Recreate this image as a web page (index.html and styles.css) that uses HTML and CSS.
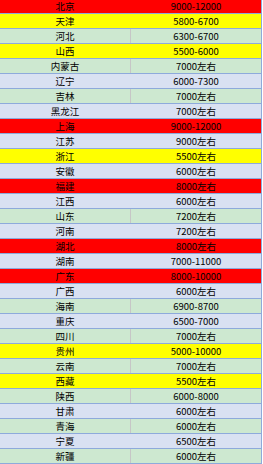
FILE: index.html
```html
<!DOCTYPE html>
<html lang="zh">
<head>
<meta charset="utf-8">
<link rel="stylesheet" href="styles.css">
</head>
<body>
<div class="table">
  <div class="row red"><div class="cell">北京</div><div class="cell val">9000-12000</div></div>
  <div class="row yellow"><div class="cell">天津</div><div class="cell val">5800-6700</div></div>
  <div class="row green"><div class="cell">河北</div><div class="cell val">6300-6700</div></div>
  <div class="row yellow"><div class="cell">山西</div><div class="cell val">5500-6000</div></div>
  <div class="row green"><div class="cell">内蒙古</div><div class="cell val">7000左右</div></div>
  <div class="row blue"><div class="cell">辽宁</div><div class="cell val">6000-7300</div></div>
  <div class="row green"><div class="cell">吉林</div><div class="cell val">7000左右</div></div>
  <div class="row blue"><div class="cell">黑龙江</div><div class="cell val">7000左右</div></div>
  <div class="row red"><div class="cell">上海</div><div class="cell val">9000-12000</div></div>
  <div class="row blue"><div class="cell">江苏</div><div class="cell val">9000左右</div></div>
  <div class="row yellow"><div class="cell">浙江</div><div class="cell val">5500左右</div></div>
  <div class="row blue"><div class="cell">安徽</div><div class="cell val">6000左右</div></div>
  <div class="row red"><div class="cell">福建</div><div class="cell val">8000左右</div></div>
  <div class="row blue"><div class="cell">江西</div><div class="cell val">6000左右</div></div>
  <div class="row green"><div class="cell">山东</div><div class="cell val">7200左右</div></div>
  <div class="row blue"><div class="cell">河南</div><div class="cell val">7200左右</div></div>
  <div class="row red"><div class="cell">湖北</div><div class="cell val">8000左右</div></div>
  <div class="row blue"><div class="cell">湖南</div><div class="cell val">7000-11000</div></div>
  <div class="row red"><div class="cell">广东</div><div class="cell val">8000-10000</div></div>
  <div class="row blue"><div class="cell">广西</div><div class="cell val">6000左右</div></div>
  <div class="row green"><div class="cell">海南</div><div class="cell val">6900-8700</div></div>
  <div class="row blue"><div class="cell">重庆</div><div class="cell val">6500-7000</div></div>
  <div class="row green"><div class="cell">四川</div><div class="cell val">7000左右</div></div>
  <div class="row yellow"><div class="cell">贵州</div><div class="cell val">5000-10000</div></div>
  <div class="row green"><div class="cell">云南</div><div class="cell val">7000左右</div></div>
  <div class="row yellow"><div class="cell">西藏</div><div class="cell val">5500左右</div></div>
  <div class="row green"><div class="cell">陕西</div><div class="cell val">6000-8000</div></div>
  <div class="row blue"><div class="cell">甘肃</div><div class="cell val">6000左右</div></div>
  <div class="row green"><div class="cell">青海</div><div class="cell val">6000左右</div></div>
  <div class="row blue"><div class="cell">宁夏</div><div class="cell val">6500左右</div></div>
  <div class="row green"><div class="cell">新疆</div><div class="cell val">6000左右</div></div>
</div>
</body>
</html>
```

FILE: styles.css
```css
html, body {
  margin: 0;
  padding: 0;
  background: #ffffff;
}

.table {
  width: 261px;
  margin-top: -2px;
  border-top: 1px solid #8eaadb;
  border-right: 1px solid #8eaadb;
  font-family: "Noto Sans CJK SC", "Liberation Sans", sans-serif;
  font-size: 9.5px;
  color: #000000;
}

.row {
  display: grid;
  grid-template-columns: 130px 131px;
  height: 14px;
  border-bottom: 1px solid #8eaadb;
}

.cell {
  height: 14px;
  line-height: 14px;
  text-align: center;
  white-space: nowrap;
}

.val {
  border-left: 1px solid transparent;
}

.red { background: #ff0000; }
.yellow { background: #ffff00; }
.green { background: #cde8d0; }
.blue { background: #d9e1f2; }

.green .val {
  border-left-color: #c6c6c6;
}
```
